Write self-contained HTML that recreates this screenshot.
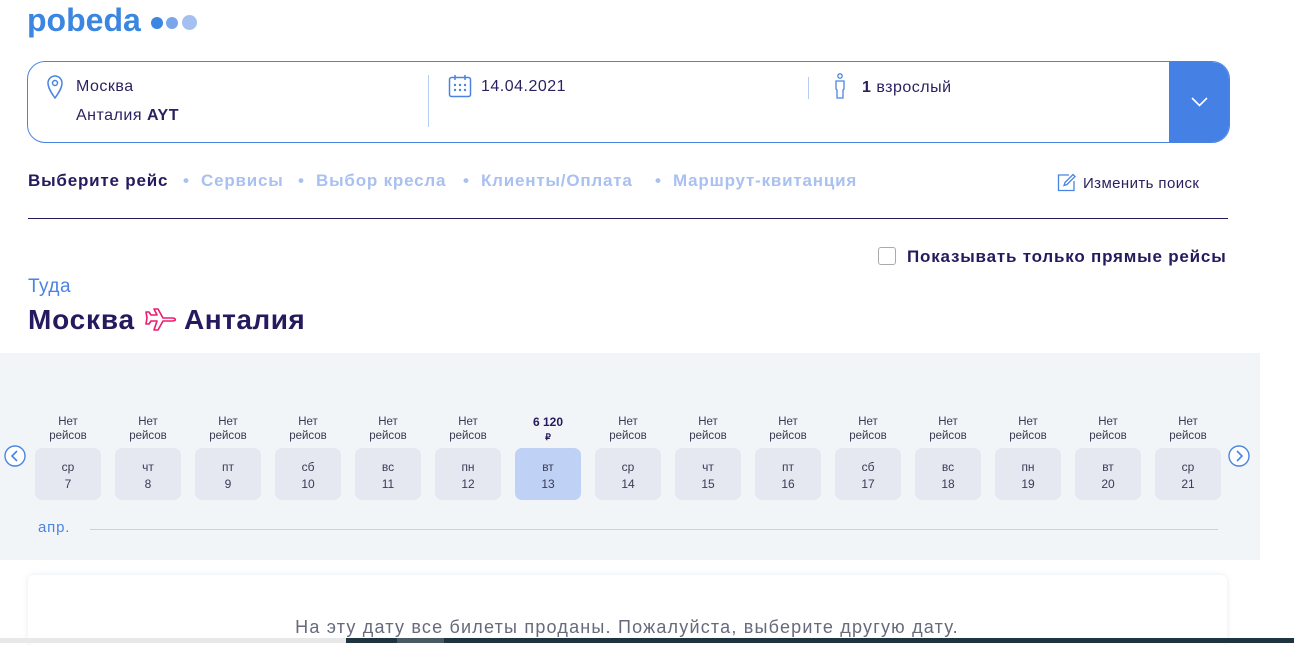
<!DOCTYPE html>
<html><head><meta charset="utf-8"><style>
*{box-sizing:border-box;margin:0;padding:0}
body{width:1294px;height:643px;overflow:hidden;background:#fff;font-family:"Liberation Sans",sans-serif;color:#251a5e;position:relative}
.a{position:absolute}
.logo{left:27px;top:2px;font-size:32px;font-weight:bold;color:#3b86e0;letter-spacing:0px}
.dot{position:absolute;width:12px;height:12px;border-radius:50%;top:17px}
.box{left:27px;top:61px;width:1203px;height:82px;border:1.5px solid #4a84e3;border-radius:18px;overflow:hidden}
.btn{right:0;top:0;width:60px;height:82px;background:#4580e4}
.t{font-size:16px;color:#2b1f5e;letter-spacing:0.5px}
.nav{top:171px;font-size:17px;font-weight:bold;color:#a9c0f0;letter-spacing:0.8px}
.cell{position:absolute;top:448px;width:66px;height:52px;border-radius:7px;background:#e6e8f1;font-size:12px;text-align:center;color:#3a3a55;padding-top:11px;line-height:17px}
.lab{position:absolute;top:415px;width:66px;text-align:center;font-size:11.5px;line-height:14px;color:#3a3a55}
</style></head><body>
<div class="a logo">pobeda</div>
<div class="dot" style="left:151px;background:#3b86e0"></div>
<div class="dot" style="left:166px;background:#79a6ea"></div>
<div class="dot" style="left:182px;background:#a3c0f0;width:15px;height:15px;top:15px"></div>

<div class="a box">
 <svg class="a" style="left:18px;top:12px" width="18" height="26" viewBox="0 0 18 26"><path d="M9 24C4 17 2 13 2 9a7 7 0 0 1 14 0c0 4-2 8-7 15z" fill="none" stroke="#4a84e3" stroke-width="1.5"/><circle cx="9" cy="9" r="2.5" fill="none" stroke="#4a84e3" stroke-width="1.5"/></svg>
 <div class="a t" style="left:48px;top:16px">Москва</div>
 <div class="a t" style="left:48px;top:45px">Анталия <b>AYT</b></div>
 <div class="a" style="left:400px;top:13px;width:1px;height:52px;background:#b9cdf2"></div>
 <svg class="a" style="left:420px;top:12px" width="24" height="24" viewBox="0 0 24 24"><rect x="1.5" y="3.5" width="21" height="19" rx="2" fill="none" stroke="#4a84e3" stroke-width="1.5"/><path d="M7 1v5M17 1v5" stroke="#4a84e3" stroke-width="1.5"/><g fill="#4a84e3"><circle cx="7" cy="11" r="1.2"/><circle cx="12" cy="11" r="1.2"/><circle cx="17" cy="11" r="1.2"/><circle cx="7" cy="16" r="1.2"/><circle cx="12" cy="16" r="1.2"/><circle cx="17" cy="16" r="1.2"/></g></svg>
 <div class="a t" style="left:453px;top:16px">14.04.2021</div>
 <div class="a" style="left:780px;top:15px;width:1px;height:22px;background:#b9cdf2"></div>
 <svg class="a" style="left:805px;top:11px" width="14" height="26" viewBox="0 0 14 26"><circle cx="7" cy="3" r="2.2" fill="none" stroke="#4a84e3" stroke-width="1.3"/><path d="M3 8h8v8l-1 1v8H4v-8l-1-1z" fill="none" stroke="#4a84e3" stroke-width="1.3"/></svg>
 <div class="a t" style="left:834px;top:17px"><b>1</b> взрослый</div>
 <div class="a btn"><svg class="a" style="left:22px;top:35px" width="17" height="10" viewBox="0 0 17 10"><path d="M1 1l7.5 7.5L16 1" fill="none" stroke="#fff" stroke-width="1.6"/></svg></div>
</div>

<div class="a nav" style="left:28px;color:#251a5e">Выберите рейс</div>
<div class="a nav" style="left:183px">•</div><div class="a nav" style="left:201px">Сервисы</div>
<div class="a nav" style="left:298px">•</div><div class="a nav" style="left:316px">Выбор кресла</div>
<div class="a nav" style="left:463px">•</div><div class="a nav" style="left:481px">Клиенты/Оплата</div>
<div class="a nav" style="left:655px">•</div><div class="a nav" style="left:673px">Маршрут-квитанция</div>
<svg class="a" style="left:1057px;top:173px" width="19" height="19" viewBox="0 0 19 19"><path d="M12 2H1.5v15.5H17V8" fill="none" stroke="#4a84e3" stroke-width="1.3"/><path d="M16 1.5l2 2-8 8-3 1 1-3z" fill="none" stroke="#4a84e3" stroke-width="1.3"/></svg>
<div class="a" style="left:1083px;top:175px;font-size:15px;color:#2b1f5e;letter-spacing:0.4px">Изменить поиск</div>
<div class="a" style="left:28px;top:218px;width:1200px;height:1px;background:#251a5e"></div>

<div class="a" style="left:878px;top:247px;width:18px;height:18px;border:1px solid #aaa;border-radius:3px"></div>
<div class="a" style="left:907px;top:247px;font-size:17px;font-weight:bold;letter-spacing:0.8px">Показывать только прямые рейсы</div>

<div class="a" style="left:28px;top:276px;font-size:19px;color:#4a84e3;letter-spacing:0.5px">Туда</div>
<div class="a" style="left:28px;top:304px;font-size:28px;font-weight:bold;letter-spacing:0.8px">Москва</div>
<svg class="a" style="left:144px;top:307px" width="34" height="28" viewBox="0 0 34 28"><path d="M10 2h4l5 9h9c4 0 5 3 0 3h-9l-5 9h-4l3-9H7l-2 3H2l1-6-1-6h3l2 3h6z" fill="none" stroke="#ec1c6e" stroke-width="1.6" stroke-linejoin="round"/></svg>
<div class="a" style="left:184px;top:304px;font-size:28px;font-weight:bold;letter-spacing:0.5px">Анталия</div>

<div class="a" style="left:0;top:353px;width:1260px;height:207px;background:#f2f5f8"></div>
<svg class="a" style="left:4px;top:445px" width="22" height="22" viewBox="0 0 22 22"><circle cx="11" cy="11" r="10" fill="#fff" stroke="#4a84e3" stroke-width="1.4"/><path d="M13 6l-5 5 5 5" fill="none" stroke="#4a84e3" stroke-width="1.6"/></svg>
<svg class="a" style="left:1228px;top:445px" width="22" height="22" viewBox="0 0 22 22"><circle cx="11" cy="11" r="10" fill="#fff" stroke="#4a84e3" stroke-width="1.4"/><path d="M9 6l5 5-5 5" fill="none" stroke="#4a84e3" stroke-width="1.6"/></svg>

<div class="lab" style="left:35px">Нет<br>рейсов</div><div class="cell" style="left:35px">ср<br>7</div>
<div class="lab" style="left:115px">Нет<br>рейсов</div><div class="cell" style="left:115px">чт<br>8</div>
<div class="lab" style="left:195px">Нет<br>рейсов</div><div class="cell" style="left:195px">пт<br>9</div>
<div class="lab" style="left:275px">Нет<br>рейсов</div><div class="cell" style="left:275px">сб<br>10</div>
<div class="lab" style="left:355px">Нет<br>рейсов</div><div class="cell" style="left:355px">вс<br>11</div>
<div class="lab" style="left:435px">Нет<br>рейсов</div><div class="cell" style="left:435px">пн<br>12</div>
<div class="lab" style="left:515px;font-weight:bold;color:#251a5e;font-size:12px">6 120<br><span style="font-size:9px">₽</span></div><div class="cell" style="left:515px;background:#c0d1f6">вт<br>13</div>
<div class="lab" style="left:595px">Нет<br>рейсов</div><div class="cell" style="left:595px">ср<br>14</div>
<div class="lab" style="left:675px">Нет<br>рейсов</div><div class="cell" style="left:675px">чт<br>15</div>
<div class="lab" style="left:755px">Нет<br>рейсов</div><div class="cell" style="left:755px">пт<br>16</div>
<div class="lab" style="left:835px">Нет<br>рейсов</div><div class="cell" style="left:835px">сб<br>17</div>
<div class="lab" style="left:915px">Нет<br>рейсов</div><div class="cell" style="left:915px">вс<br>18</div>
<div class="lab" style="left:995px">Нет<br>рейсов</div><div class="cell" style="left:995px">пн<br>19</div>
<div class="lab" style="left:1075px">Нет<br>рейсов</div><div class="cell" style="left:1075px">вт<br>20</div>
<div class="lab" style="left:1155px">Нет<br>рейсов</div><div class="cell" style="left:1155px">ср<br>21</div>

<div class="a" style="left:38px;top:519px;font-size:15px;color:#4a84e3;letter-spacing:0.8px">апр.</div>
<div class="a" style="left:90px;top:529px;width:1128px;height:1px;background:#c5d3ea"></div>

<div class="a" style="left:28px;top:575px;width:1199px;height:70px;background:#fff;border-radius:6px;box-shadow:0 0 6px rgba(150,170,200,.25)"></div>
<div class="a" style="left:0;top:617px;width:1254px;text-align:center;font-size:18px;letter-spacing:1.2px;color:#666a7a">На эту дату все билеты проданы. Пожалуйста, выберите другую дату.</div>

<div class="a" style="left:0;top:638px;width:346px;height:5px;background:#e8e8e8"></div>
<div class="a" style="left:346px;top:638px;width:948px;height:5px;background:#1f3340"></div>
<div class="a" style="left:397px;top:638px;width:47px;height:5px;background:#4a5a63"></div>
</body></html>
